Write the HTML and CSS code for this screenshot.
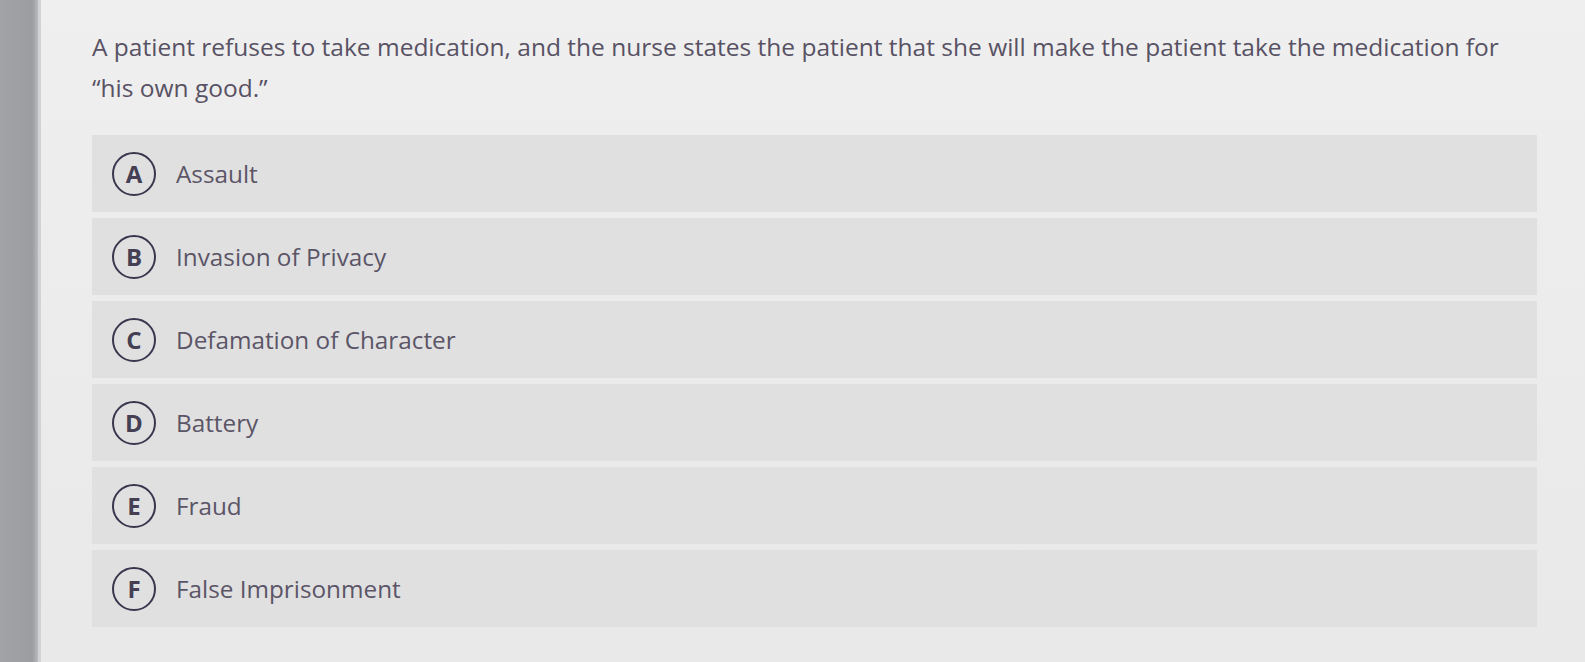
FILE: index.html
```html
<!DOCTYPE html>
<html>
<head>
<meta charset="utf-8">
<link rel="stylesheet" href="styles.css">
</head>
<body>
<div class="screen">
  <div class="edge"></div>
  <main class="content">
    <p class="question">A patient refuses to take medication, and the nurse states the patient that she will make the patient take the medication for “his own good.”</p>
    <ul class="options">
      <li class="option"><span class="letter">A</span><span class="label">Assault</span></li>
      <li class="option"><span class="letter">B</span><span class="label">Invasion of Privacy</span></li>
      <li class="option"><span class="letter">C</span><span class="label">Defamation of Character</span></li>
      <li class="option"><span class="letter">D</span><span class="label">Battery</span></li>
      <li class="option"><span class="letter">E</span><span class="label">Fraud</span></li>
      <li class="option"><span class="letter">F</span><span class="label">False Imprisonment</span></li>
    </ul>
  </main>
</div>
</body>
</html>
```
FILE: styles.css
```css
html, body {
  margin: 0;
  padding: 0;
  height: 100%;
}
body {
  background: #ebebec;
  font-family: "Open Sans", "Noto Sans", sans-serif;
  overflow: hidden;
}
.screen {
  display: flex;
  height: 662px;
}
.edge {
  width: 38px;
  flex: none;
  background: linear-gradient(90deg, #a2a3a7 0%, #9c9da1 85%, #b9babd 100%);
  border-right: 3px solid #d2d2d4;
}
.content {
  flex: 1;
  padding: 26px 48px 0 51px;
  background: linear-gradient(180deg, #efefef 0%, #ebebeb 60%, #e9e9ea 100%);
}
.question {
  margin: 0;
  font-size: 24.5px;
  line-height: 41px;
  color: #585264;
}
.options {
  list-style: none;
  margin: 27px 0 0;
  padding: 0;
  display: flex;
  flex-direction: column;
  gap: 6px;
}
.option {
  height: 77px;
  background: #e0e0e1;
  display: flex;
  align-items: center;
  padding-left: 20px;
  gap: 20px;
}
.letter {
  width: 40px;
  height: 40px;
  border: 2.7px solid #3b354d;
  border-radius: 50%;
  display: flex;
  align-items: center;
  justify-content: center;
  font-size: 24px;
  font-weight: 700;
  color: #453f54;
  flex: none;
}
.label {
  font-size: 24.3px;
  color: #5b5567;
}
```
